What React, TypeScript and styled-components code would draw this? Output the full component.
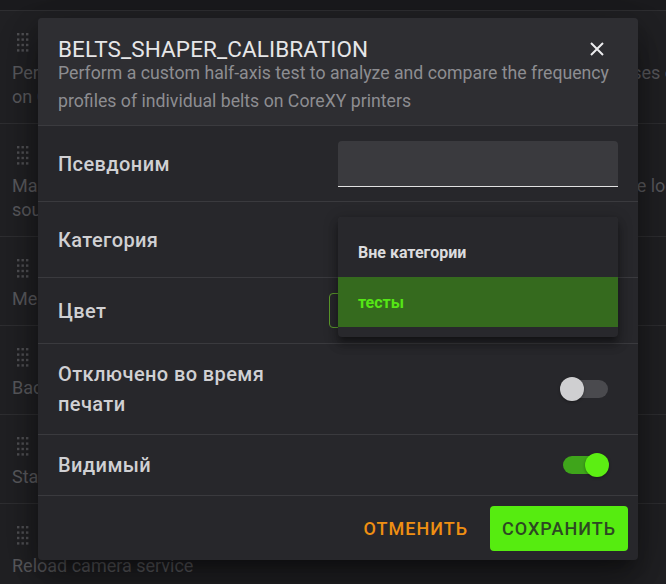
import React from 'react';
import styled, { createGlobalStyle } from 'styled-components';

const Global = createGlobalStyle`
  html, body { margin: 0; padding: 0; background: #252529; }
  body { font-family: Roboto, "Noto Sans", Arial, sans-serif; overflow: hidden; }
  * { box-sizing: border-box; }
`;

const Page = styled.div`
  position: relative;
  width: 666px;
  height: 584px;
  overflow: hidden;
  background: #252529;
  padding-top: 10px;
`;

const BgList = styled.div`
  border-top: 1px solid #3f3f43;
  background: #2c2c30;
`;

const BgRow = styled.div`
  padding: 22px 12px 14px 12px;
  border-bottom: 1px solid #3f3f43;
`;

const DragWrap = styled.div`
  height: 18px;
  margin: 0 0 10px 5px;
  display: flex;
`;

const BgLine = styled.div`
  font-size: 18px;
  line-height: 24px;
  color: #7b7b80;
  white-space: nowrap;
`;

const Scrim = styled.div`
  position: absolute;
  inset: 0;
  background: rgba(0, 0, 0, 0.25);
  display: flex;
  justify-content: center;
  align-items: flex-start;
  padding: 18px 0 0 10px;
`;

const Dialog = styled.div`
  position: relative;
  width: 600px;
  height: 542px;
  background: #27272b;
  border-radius: 4px;
  box-shadow: 0 11px 15px -7px rgba(0, 0, 0, 0.35), 0 24px 38px 3px rgba(0, 0, 0, 0.25),
    0 9px 46px 8px rgba(0, 0, 0, 0.22);
  display: flex;
  flex-direction: column;
`;

const Header = styled.div`
  background: #2e2e32;
  border-radius: 4px 4px 0 0;
  padding: 19px 20px 10px 20px;
  border-bottom: 1px solid #3b3b3f;
`;

const TitleRow = styled.div`
  display: flex;
  align-items: center;
  justify-content: space-between;
`;

const Title = styled.div`
  font-size: 22.5px;
  line-height: 24px;
  font-weight: 400;
  color: #e6e6e8;
  letter-spacing: 0.1px;
`;

const CloseBtn = styled.button`
  background: none;
  border: none;
  padding: 0;
  margin-right: 14px;
  width: 14px;
  height: 14px;
  display: flex;
  cursor: pointer;
`;

const Subtitle = styled.div`
  margin-top: -2px;
  font-size: 17.7px;
  line-height: 28px;
  color: #8d8d91;
`;

const FormRow = styled.div<{ $pb?: number }>`
  display: flex;
  align-items: center;
  justify-content: space-between;
  padding: 15px 20px ${(p) => p.$pb ?? 14}px 20px;
  border-bottom: 1px solid #3a3a3e;
`;

const Label = styled.div`
  font-size: 20px;
  line-height: 30px;
  font-weight: 500;
  color: #d0d0d3;
  letter-spacing: 0.4px;
  max-width: 250px;
`;

const TextField = styled.div`
  width: 280px;
  height: 46px;
  background: #3a3a3e;
  border-radius: 4px 4px 0 0;
  border-bottom: 1.5px solid #e2e2e2;
`;

const ColorField = styled.div`
  width: 289px;
  height: 35px;
  border: 1px solid #5b9a2c;
  border-radius: 4px;
`;

const SwitchTrack = styled.div<{ $on?: boolean }>`
  position: relative;
  width: 45px;
  height: 18px;
  margin-right: 10px;
  border-radius: 9px;
  background: ${(p) => (p.$on ? '#3fa51b' : '#4a4a4e')};
`;

const SwitchThumb = styled.div<{ $on?: boolean }>`
  position: absolute;
  top: -3px;
  left: ${(p) => (p.$on ? '22px' : '-3px')};
  width: 24px;
  height: 24px;
  border-radius: 50%;
  background: ${(p) => (p.$on ? '#5cee13' : '#cfcfd1')};
  box-shadow: 0 1px 3px rgba(0, 0, 0, 0.35);
`;

const Footer = styled.div`
  flex: 1;
  display: flex;
  justify-content: flex-end;
  align-items: center;
  gap: 10px;
  padding: 1px 10px 0 10px;
`;

const Button = styled.button<{ $primary?: boolean }>`
  height: 45px;
  padding: 0 12px;
  border: none;
  border-radius: 4px;
  font-family: Roboto, Arial, sans-serif;
  font-size: 18px;
  font-weight: 500;
  letter-spacing: 1px;
  text-transform: uppercase;
  background: ${(p) => (p.$primary ? '#56ec10' : 'transparent')};
  color: ${(p) => (p.$primary ? '#2d4823' : '#ef8f12')};
  cursor: pointer;
`;

const Menu = styled.div`
  position: absolute;
  left: 300px;
  top: 199px;
  width: 280px;
  padding: 10px 0;
  background: #28282c;
  border-radius: 4px;
  box-shadow: 0 5px 5px -3px rgba(0, 0, 0, 0.3), 0 8px 10px 1px rgba(0, 0, 0, 0.22),
    0 3px 14px 2px rgba(0, 0, 0, 0.2);
`;

const MenuItem = styled.div<{ $active?: boolean }>`
  height: 50px;
  display: flex;
  align-items: center;
  padding: 0 20px;
  font-size: 16px;
  font-weight: 700;
  background: ${(p) => (p.$active ? '#356a1e' : 'transparent')};
  color: ${(p) => (p.$active ? '#55e615' : '#dcdcde')};
`;

const DragIcon = () => (
  <svg width="14" height="19" viewBox="0 0 14 19">
    {[0, 1, 2, 3].map((r) =>
      [0, 1, 2].map((c) => (
        <rect key={`${r}-${c}`} x={c * 4.5} y={r * 5.4} width="2.4" height="2.4" fill="#6e6e73" />
      ))
    )}
  </svg>
);

const bgRows: string[][] = [
  [
    'Perform a custom half-axis test to analyze and compare the frequency responses of individual belts',
    'on CoreXY printers',
  ],
  ['Make a backup of all the current printer configuration files and store them in the local', 'sources folder'],
  ['Measure the axes map of the accelerometer'],
  ['Backup all config files to the repository'],
  ['Start the vibrations measurement'],
  ['Reload camera service'],
];

export default function App() {
  return (
    <>
      <Global />
      <Page>
        <BgList>
          {bgRows.map((lines, i) => (
            <BgRow key={i}>
              <DragWrap>
                <DragIcon />
              </DragWrap>
              {lines.map((l, j) => (
                <BgLine key={j}>{l}</BgLine>
              ))}
            </BgRow>
          ))}
        </BgList>
        <Scrim>
          <Dialog>
            <Header>
              <TitleRow>
                <Title>BELTS_SHAPER_CALIBRATION</Title>
                <CloseBtn aria-label="close">
                  <svg width="14" height="14" viewBox="0 0 14 14">
                    <path d="M1 1 L13 13 M13 1 L1 13" stroke="#ececee" strokeWidth="2" />
                  </svg>
                </CloseBtn>
              </TitleRow>
              <Subtitle>
                Perform a custom half-axis test to analyze and compare the frequency profiles of individual belts on
                CoreXY printers
              </Subtitle>
            </Header>
            <FormRow>
              <Label>Псевдоним</Label>
              <TextField />
            </FormRow>
            <FormRow>
              <Label>Категория</Label>
              <TextField />
            </FormRow>
            <FormRow $pb={15}>
              <Label>Цвет</Label>
              <ColorField />
            </FormRow>
            <FormRow $pb={15}>
              <Label>Отключено во время печати</Label>
              <SwitchTrack>
                <SwitchThumb />
              </SwitchTrack>
            </FormRow>
            <FormRow $pb={15}>
              <Label>Видимый</Label>
              <SwitchTrack $on>
                <SwitchThumb $on />
              </SwitchTrack>
            </FormRow>
            <Footer>
              <Button>Отменить</Button>
              <Button $primary>Сохранить</Button>
            </Footer>
            <Menu>
              <MenuItem>Вне категории</MenuItem>
              <MenuItem $active>тесты</MenuItem>
            </Menu>
          </Dialog>
        </Scrim>
      </Page>
    </>
  );
}
